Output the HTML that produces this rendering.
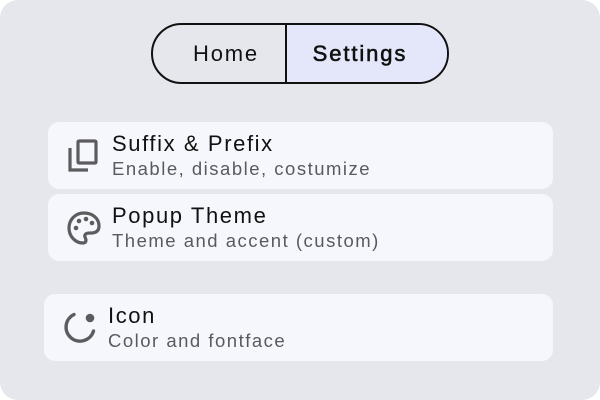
<!DOCTYPE html>
<html><head><style>
html,body{margin:0;padding:0;background:#fff;}
body{width:600px;height:400px;position:relative;overflow:hidden;font-family:"Liberation Sans",sans-serif;}
.bg{position:absolute;left:0;top:0;width:600px;height:400px;background:#e6e7ec;border-radius:18px;}
.tog{position:absolute;left:151px;top:23px;width:294px;height:57px;border:2px solid #111;border-radius:31px;overflow:hidden;display:flex;}
.tog div{display:flex;align-items:center;justify-content:center;font-size:22px;color:#111;}
.h{width:134px;border-right:2px solid #111;padding-left:14px;box-sizing:border-box;letter-spacing:1.8px;}
.s{flex:1;background:#e3e7f9;padding-right:14px;letter-spacing:1.9px;-webkit-text-stroke:0.6px #111;}
.card{position:absolute;background:#f6f7fc;border-radius:11px;}
.t{position:absolute;font-size:22px;color:#111;letter-spacing:1.6px;white-space:nowrap;}
.d{position:absolute;font-size:18.5px;color:#5a5a5e;letter-spacing:1.5px;white-space:nowrap;}
svg{position:absolute;}
</style></head><body>
<div class="bg"></div>
<div class="tog"><div class="h">Home</div><div class="s">Settings</div></div>

<div class="card" style="left:48px;top:122px;width:505px;height:67px"></div>
<svg style="left:67px;top:139px" width="32" height="36" viewBox="0 0 32 36" fill="none" stroke="#5c5c5e" stroke-width="3.2">
<rect x="11" y="2" width="18" height="22" rx="1"/>
<path d="M3 9 V31 H21"/>
</svg>
<div class="t" style="left:112px;top:131px">Suffix &amp; Prefix</div>
<div class="d" style="left:112px;top:158px">Enable, disable, costumize</div>

<div class="card" style="left:48px;top:194px;width:505px;height:67px"></div>
<svg style="left:66px;top:210px" width="36" height="36" viewBox="0 0 36 36">
<path d="M18 3 C9 3 3 10 3 18 C3 26 9 33 17 33 C19 33 20 32 20 30 C20 28 18 27 19 25 C20 23 22 23 25 23 C30 23 33 21 33 16 C33 8 26 3 18 3 Z" fill="none" stroke="#5c5c5e" stroke-width="3.2"/>
<circle cx="10" cy="18" r="2.3" fill="#5c5c5e"/><circle cx="13" cy="11" r="2.3" fill="#5c5c5e"/>
<circle cx="20" cy="9" r="2.3" fill="#5c5c5e"/><circle cx="26" cy="13" r="2.3" fill="#5c5c5e"/>
</svg>
<div class="t" style="left:112px;top:203px">Popup Theme</div>
<div class="d" style="left:112px;top:230px">Theme and accent (custom)</div>

<div class="card" style="left:44px;top:294px;width:509px;height:67px"></div>
<svg style="left:61px;top:309px" width="38" height="38" viewBox="0 0 38 38">
<path d="M13 5.5 A14 14 0 1 0 32.5 22" fill="none" stroke="#5c5c5e" stroke-width="3.4" stroke-linecap="round"/>
<circle cx="29" cy="9" r="4.3" fill="#5c5c5e"/>
</svg>
<div class="t" style="left:108px;top:303px">Icon</div>
<div class="d" style="left:108px;top:330px">Color and fontface</div>
</body></html>
